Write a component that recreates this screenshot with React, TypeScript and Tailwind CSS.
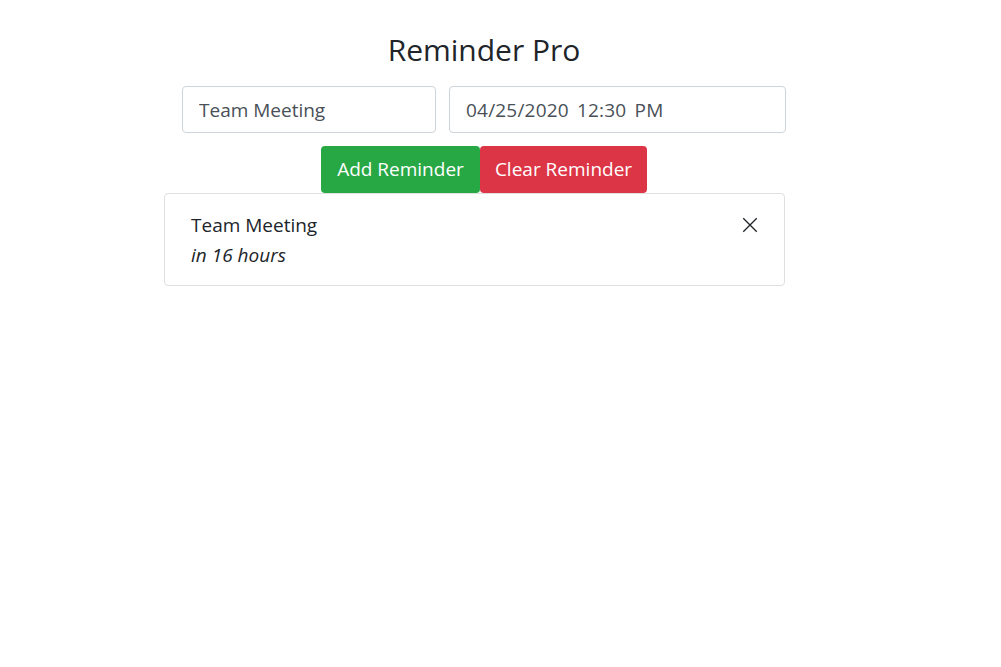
import React from "react";

const App = () => {
  return (
    <div className="min-h-screen bg-white text-[#212529] font-['Open_Sans',sans-serif]">
      <div className="ml-[164px] w-[640px] pt-[31px]">
        <h1 className="text-center text-[30px] leading-[38px] font-normal">Reminder Pro</h1>
        <div className="mt-[17px] flex justify-center gap-[13px]">
          <input
            className="w-[254px] h-[47px] px-4 rounded border border-[#ced4da] text-[19px] text-[#495057] outline-none"
            defaultValue="Team Meeting"
          />
          <input
            className="w-[337px] h-[47px] px-4 rounded border border-[#ced4da] text-[19px] text-[#495057] tracking-[0.2px] [word-spacing:3px] outline-none"
            defaultValue="04/25/2020 12:30 PM"
          />
        </div>
        <div className="mt-[13px] flex justify-center">
          <button className="w-[159px] h-[47px] rounded bg-[#28a745] text-white text-[19px]">Add Reminder</button>
          <button className="w-[167px] h-[47px] rounded bg-[#dc3545] text-white text-[19px]">Clear Reminder</button>
        </div>
        <div className="w-[621px] h-[93px] rounded border border-[#dfdfdf] pl-[26px] pr-[25px] pt-[16px] flex justify-between">
          <div className="text-[19px] leading-[30px]">
            <div>Team Meeting</div>
            <div className="italic">in 16 hours</div>
          </div>
          <svg width="18" height="18" viewBox="0 0 16 16" className="mt-[6px]" fill="none" stroke="#212529" strokeWidth="1.2">
            <path d="M2 2 L14 14 M14 2 L2 14" />
          </svg>
        </div>
      </div>
    </div>
  );
};

export default App;
